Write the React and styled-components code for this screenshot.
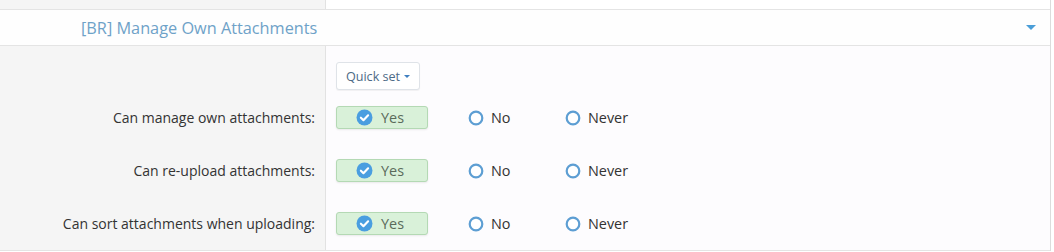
import styled, { createGlobalStyle } from "styled-components";

const GlobalStyle = createGlobalStyle`
  html, body {
    margin: 0;
    padding: 0;
    background-color: #ffffff;
    font-family: "Open Sans", "Noto Sans", sans-serif;
  }
`;

const Page = styled.div`
  width: 1050px;
  border-right: 1px solid #dcdcdc;
  background-color: #fdfcfe;
`;

const Row = styled.div`
  display: grid;
  grid-template-columns: 326px 1fr;
  height: ${(p) => p.$height}px;
  border-bottom: ${(p) => (p.$divider ? "1px solid #e4e4e4" : "none")};
`;

const LabelCell = styled.div`
  background-color: #f5f5f5;
  border-right: 1px solid #e2e2e2;
  display: flex;
  align-items: center;
  justify-content: flex-end;
  padding-right: 10px;
  font-size: 14px;
  color: #333333;
`;

const ValueCell = styled.div`
  display: flex;
  align-items: ${(p) => (p.$top ? "flex-start" : "center")};
  padding: ${(p) => (p.$top ? "16px 0 0 10px" : "0 0 0 10px")};
  background-color: ${(p) => (p.$white ? "#ffffff" : "#fdfcfe")};
`;

const Header = styled.div`
  height: 35px;
  display: flex;
  align-items: center;
  justify-content: space-between;
  padding: 0 14px 0 81px;
  background-color: #fefefe;
  border-bottom: 1px solid #e4e4e4;
`;

const HeaderTitle = styled.span`
  font-size: 16.3px;
  color: #6ea2c8;
`;

const Caret = styled.span`
  width: 0;
  height: 0;
  border-left: ${(p) => p.$size}px solid transparent;
  border-right: ${(p) => p.$size}px solid transparent;
  border-top: ${(p) => p.$size}px solid ${(p) => p.$color};
  display: inline-block;
`;

const QuickButton = styled.button`
  height: 28px;
  width: 84px;
  display: flex;
  align-items: center;
  justify-content: center;
  gap: 4px;
  padding: 0;
  border: 1px solid #dfe3e8;
  border-radius: 3px;
  background-color: #ffffff;
  font-family: inherit;
  font-size: 12.6px;
  color: #4d6a86;
  box-shadow: 0 1px 1px rgba(0, 0, 0, 0.05);
`;

const Option = styled.label`
  display: flex;
  align-items: center;
  gap: 7px;
  box-sizing: border-box;
  width: ${(p) => p.$width}px;
  margin-right: ${(p) => p.$gap}px;
  font-size: 14.4px;
  color: #333333;
`;

const SelectedOption = styled.label`
  display: flex;
  align-items: center;
  justify-content: center;
  gap: 8px;
  box-sizing: border-box;
  width: 92px;
  height: 23px;
  margin-right: 40px;
  padding-right: 4px;
  background-color: #d9f1d9;
  border: 1px solid #b4d9b4;
  border-radius: 3px;
  box-shadow: 0 1px 2px rgba(0, 0, 0, 0.08);
  font-size: 14.4px;
  color: #5b6b5b;
`;

const CheckedIcon = () => (
  <svg width="17" height="17" viewBox="0 0 16 16">
    <circle cx="8" cy="8" r="7.5" fill="#4a9ee0" />
    <path
      d="M4.6 8.2 L7 10.5 L11.4 5.9"
      fill="none"
      stroke="#ffffff"
      strokeWidth="2"
      strokeLinecap="round"
      strokeLinejoin="round"
    />
  </svg>
);

const RadioIcon = () => (
  <svg width="16" height="16" viewBox="0 0 16 16">
    <circle cx="8" cy="8" r="6.3" fill="#ffffff" stroke="#5d9ed3" strokeWidth="2.2" />
  </svg>
);

const permissions = [
  "Can manage own attachments:",
  "Can re-upload attachments:",
  "Can sort attachments when uploading:",
];

const App = () => {
  return (
    <Page>
      <GlobalStyle />
      <Row $height={9} $divider>
        <LabelCell />
        <ValueCell $white />
      </Row>
      <Header>
        <HeaderTitle>[BR] Manage Own Attachments</HeaderTitle>
        <Caret $size={5} $color="#4a9ed8" />
      </Header>
      <Row $height={45}>
        <LabelCell />
        <ValueCell $top>
          <QuickButton>
            Quick set <Caret $size={3.5} $color="#3f7fc0" />
          </QuickButton>
        </ValueCell>
      </Row>
      {permissions.map((label, i) => (
        <Row key={label} $height={53} $divider={i === permissions.length - 1}>
          <LabelCell>{label}</LabelCell>
          <ValueCell>
            <SelectedOption>
              <CheckedIcon />
              Yes
            </SelectedOption>
            <Option $width={57} $gap={40}>
              <RadioIcon />
              No
            </Option>
            <Option $width={80} $gap={0}>
              <RadioIcon />
              Never
            </Option>
          </ValueCell>
        </Row>
      ))}
    </Page>
  );
};

export default App;
